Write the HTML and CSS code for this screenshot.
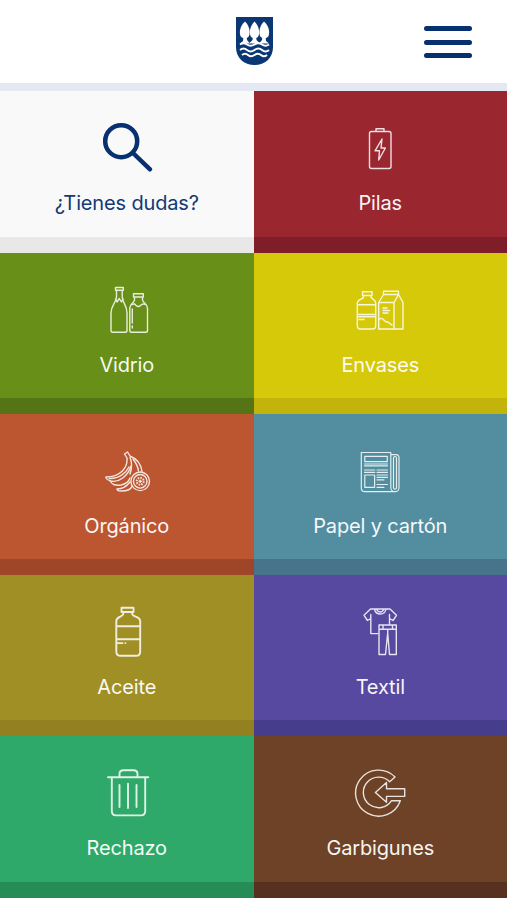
FILE: index.html
```
<!DOCTYPE html>
<html lang="es">
<head>
    <meta charset="UTF-8">
    <meta name="viewport" content="width=device-width, initial-scale=1.0">
    <title>Reciclaje</title>
    <link rel="stylesheet" href="styles.css">
</head>
<body>
    <header class="header">
        <svg class="logo" viewBox="0 0 38 50">
            <path class="shield" d="M1 1H38V31C38 42 30 49 19.500 49S1 42 1 31Z"/>
            <g class="shield-art">
                <path d="M10 5.500C5 10 4 16 5.500 20C7 23 12.500 23 14 20C15.500 16 14.500 10 10 5.500Z"/>
                <path d="M19.500 5.500C15 10 14 16 15.500 20C17 23 22 23 23.500 20C25 16 24 10 19.500 5.500Z"/>
                <path d="M29 5.500C24.500 10 23.500 16 25 20C26.500 23 32 23 33.500 20C35 16 34 10 29 5.500Z"/>
                <path d="M8.500 20H11.500L12 24L15 27.500H5L8 25ZM18 20H21L21.500 24L25 27.500H14L17.500 24ZM27.500 20H30.500L31 25L34 27.500H24L27 24Z"/>
            </g>
            <g class="waves">
                <path d="M5 28.500Q8.500 26 12 28.500T19.500 28.500T27 28.500T34 28.500"/>
                <path d="M5 34Q8.500 31 12 34T19.500 34T27 34T34 34"/>
                <path d="M7 39Q10 36.500 13 39T19.500 39T26 39T32 39"/>
            </g>
        </svg>
        <button class="menu-btn" aria-label="Menú">
            <span></span>
            <span></span>
            <span></span>
        </button>
    </header>

    <main class="grid">
        <a class="tile dudas">
            <svg class="icon" viewBox="0 0 60 60">
                <circle cx="24.2" cy="24.2" r="16"/>
                <path d="M36 36L53 52.300"/>
            </svg>
            <span class="label">¿Tienes dudas?</span>
        </a>
        <a class="tile pilas">
            <svg class="icon" viewBox="0 0 60 60">
                <rect x="19.5" y="14.5" width="21.5" height="37" rx="2"/>
                <path d="M26 14V11.800H34V14M32 22L25 33.800H29.500L28.700 43L35.400 31H31Z"/>
            </svg>
            <span class="label">Pilas</span>
        </a>
        <a class="tile vidrio">
            <svg class="icon" viewBox="0 0 60 60">
                <path d="M18.500 8.500H26.300V11.300H18.500ZM19.500 11.500V18C19 24 14 26 14 34V51.500Q14 53.300 16 53.300H28Q30 53.300 30 51.500V34C30 26 25.500 24 25.200 18V11.500"/>
                <path d="M18.500 20L20 23L22.300 19.500L24.500 23L26 20"/>
                <path d="M36.500 14.800H46.300V18H36.500ZM37.500 18V21C37 24 32.800 25 32.800 29V51.500Q32.800 53.300 34.800 53.300H48.500Q50.500 53.300 50.500 51.500V29C50.500 25 46 24 45.500 21V18"/>
                <path d="M35.500 25.500Q37.500 24 39 26.500Q41.500 28.500 43.500 26.500Q45.500 24 48 25.500M35.300 30V44M35.300 47V49"/>
            </svg>
            <span class="label">Vidrio</span>
        </a>
        <a class="tile envases">
            <svg class="icon" viewBox="0 0 60 60">
                <path d="M12.500 12.800H22V16.500H12.500ZM13.500 16.500V18C13 20.500 7.300 20 7.300 24V46.500Q7.300 50 10.500 50H22.500Q25.700 50 25.700 46.500V24C25.700 20 21.500 20.500 21 18V16.500M7.300 25.800H25.700M7.300 35.500H25.700M7.300 37.800H25.700M9 40.500H14"/>
                <path d="M33.500 12.300H48.500V15.500H33.500ZM33.500 15.500L28.700 23.500V50H53V23.500L48.500 15.500L44 23.500V50M28.700 23.500H44M33 29H37M33 31.500H39.500M33 34H38M28.700 41C33 36 34 44 37.500 43C39 43 40 45.500 42 46"/>
            </svg>
            <span class="label">Envases</span>
        </a>
        <a class="tile organico">
            <svg class="icon" viewBox="0 0 60 60">
                <path d="M27.500 14L30.500 12L33 16C38 18 44 23 45 31.500M27.500 14L30 18C31 28 23 37 9 37C8.500 39 11 40 13.500 41C22 43 31 36 34 26"/>
                <path d="M33 17.500C36 24 34 31 33 34M36 19C39 23 41 27 41.500 31M13.500 41C14 44 18 46 24 45C29 44 32 41 33 38M20 49Q20 51 24 51C29 51 34 50 35 46M20 49C25 49 30 46 33 42M12 38.500C22 39 29 33 32 27"/>
                <circle cx="43.200" cy="41.300" r="9.300"/>
                <circle cx="43.200" cy="41.300" r="6.800"/>
                <circle class="seeds" cx="43.200" cy="41.300" r="3.500"/>
                <path d="M42 41.300H44.400M43.200 40.100V42.500"/>
            </svg>
            <span class="label">Orgánico</span>
        </a>
        <a class="tile papel">
            <svg class="icon" viewBox="0 0 60 60">
                <path d="M11.300 12.500H40.800V48Q41.500 51.700 45 51.700H15Q11.300 51.700 11.300 48ZM41 14.700H46Q49 14.700 49 18V48Q48.500 51.700 45 51.700M43.500 48V18Q43.500 16.500 45 16.500Q46.500 16.500 46.500 18V48Q45 50.500 43.500 48"/>
                <rect x="14.800" y="16.300" width="22.500" height="5.400"/>
                <rect x="14.800" y="35" width="9.800" height="12.300"/>
                <path d="M14.500 24H37.500M14.500 25.800H37.500M14.500 30H24.800M14.500 32.300H24.800M27 30H37.500M27 32.300H37.500M27 35H37.500M27 37.300H37.500M27 39.800H34M27 44.500H37.500M27 47.300H34"/>
            </svg>
            <span class="label">Papel y cartón</span>
        </a>
        <a class="tile aceite">
            <svg class="icon" viewBox="0 0 60 60">
                <path d="M24.500 6.800H36.500V11H24.500ZM26.300 11V13C26 16 19.300 15.500 19.300 20V50.500Q19.300 54.800 23.500 54.800H39Q43.200 54.800 43.200 50.500V20C43.200 15.500 35.500 16 35.200 13V11M19.300 25.300H43.200M19.300 38.200H43.200M20.500 42.100H25.500M28.300 42.100H28.500"/>
            </svg>
            <span class="label">Aceite</span>
        </a>
        <a class="tile textil">
            <svg class="icon" viewBox="0 0 60 60">
                <path d="M28 32.600H20.800V17.500L17.500 19.500L14 14.300L20.500 8H40L46.500 14.300L43 19.500L39.500 17.500V23.500M20.800 17.500V13.500M39.500 17.500V13.500M24.500 8Q25.500 13 30.300 13T36 8M26.500 8Q28 11 30.300 11T34 8"/>
                <path d="M29 24H46.300V53.500H39.500L37.700 32L35.500 53.500H29ZM29 28.300H46.300M33 24V28.300M42.500 24V28.300M37.700 28.300V33"/>
            </svg>
            <span class="label">Textil</span>
        </a>
        <a class="tile rechazo">
            <svg class="icon" viewBox="0 0 60 60">
                <path d="M11 15.300H51.300M14.800 15.300V49Q14.800 53.400 19 53.400H44Q48.200 53.400 48.200 49V15.300M22.500 15.300V12Q22.500 8.300 26.500 8.300H36.500Q40.500 8.300 40.500 12V15.300M22.500 23V45M31 21.800V46M39.500 23V45"/>
            </svg>
            <span class="label">Rechazo</span>
        </a>
        <a class="tile garbigunes">
            <svg class="icon" viewBox="0 0 60 60">
                <path d="M45 15A23 23 0 1 0 50.300 38.700H41.500A15.300 15.300 0 1 1 39.700 19.800Z"/>
                <path d="M25.400 30.500L36.500 20.500V26.700H54.700V34.400H36.500V40.300Z"/>
            </svg>
            <span class="label">Garbigunes</span>
        </a>
    </main>
</body>
</html>
```

FILE: styles.css
```
:root {
    --navy: #06306f;
}

* {
    margin: 0;
    padding: 0;
    box-sizing: border-box;
}

body {
    font-family: Inter, Roboto, sans-serif;
    background-color: #fff;
    height: 900px;
    overflow: hidden;
}

/* Header */
.header {
    display: grid;
    grid-template-columns: 1fr 38px 1fr;
    align-items: center;
    height: 91.3px;
    padding: 0 35.5px 1px;
    background-color: #fff;
    border-bottom: 8px solid #e3e8f2;
}

.logo {
    grid-column: 2;
    width: 38px;
    height: 50px;
}

.shield {
    fill: #0a3774;
}

.shield-art {
    fill: #fff;
}

.waves {
    fill: none;
    stroke: #fff;
    stroke-width: 2;
}

.menu-btn {
    justify-self: end;
    display: flex;
    flex-direction: column;
    gap: 8.5px;
    width: 48px;
    margin-top: 2px;
    border: none;
    background: none;
}

.menu-btn span {
    height: 5px;
    border-radius: 3px;
    background-color: var(--navy);
}

/* Tiles */
.grid {
    display: grid;
    grid-template-columns: 1fr 1fr;
    grid-auto-rows: 161.25px;
}

.tile {
    display: flex;
    flex-direction: column;
    align-items: center;
    padding-top: 26px;
    color: #fff;
    border-bottom: 16px solid;
}

.icon {
    width: 60px;
    height: 60px;
    fill: none;
    stroke: currentColor;
    stroke-width: 1.4;
    stroke-linecap: round;
    stroke-linejoin: round;
    opacity: 0.85;
}

.label {
    margin-top: 14px;
    font-size: 20px;
    line-height: 24px;
    letter-spacing: -0.15px;
    white-space: nowrap;
    opacity: 0.95;
}

.dudas {
    color: var(--navy);
    background-color: #f9f9f9;
    border-color: #e8e8e8;
}

.dudas .icon {
    stroke-width: 4.5;
    opacity: 1;
}

.pilas {
    background-color: #9a2730;
    border-color: #7f1e28;
}

.vidrio {
    background-color: #688f18;
    border-color: #557415;
}

.envases {
    background-color: #d6c90a;
    border-color: #c3b40b;
}

.organico {
    background-color: #bc5630;
    border-color: #9f4628;
}

.seeds {
    stroke-width: 2;
    stroke-dasharray: 1.6 1.1;
    stroke-linecap: butt;
}

.papel {
    background-color: #528e9f;
    border-color: #47748b;
}

.papel .icon {
    stroke-width: 1.2;
}

.aceite {
    background-color: #a08f24;
    border-color: #928021;
}

.aceite .icon,
.rechazo .icon {
    stroke-width: 1.9;
}

.textil {
    background-color: #5849a0;
    border-color: #473d8d;
}

.rechazo {
    background-color: #2fa969;
    border-color: #268c57;
}

.garbigunes {
    background-color: #6e4226;
    border-color: #58301f;
}
```
